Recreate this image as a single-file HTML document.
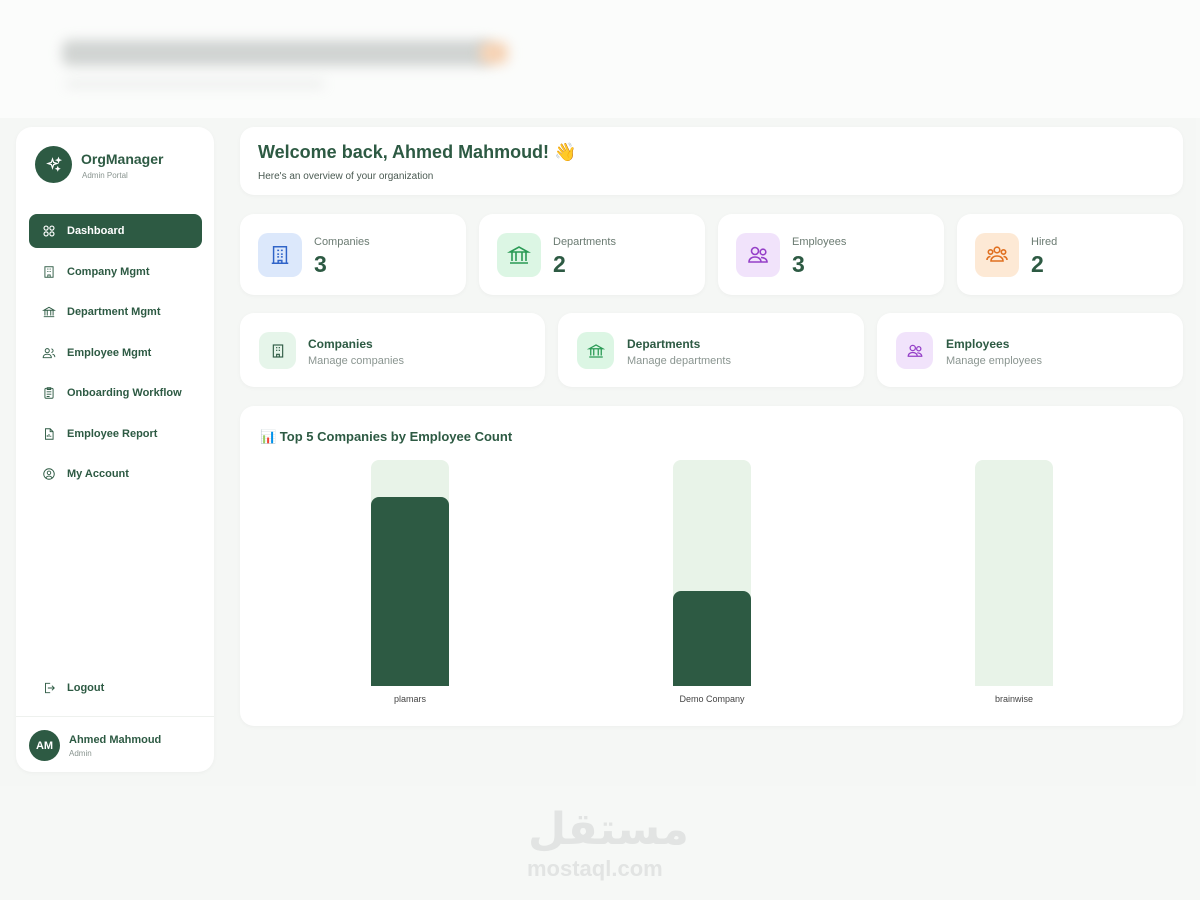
<!DOCTYPE html>
<html><head><meta charset="utf-8"><style>
*{box-sizing:border-box;margin:0;padding:0}
body{width:1200px;height:900px;overflow:hidden;background:#f6f8f6;font-family:"Liberation Sans",sans-serif;color:#2d5a43;position:relative}
.top{position:absolute;left:0;top:0;width:1200px;height:118px;background:#fbfcfb}
.blur{position:absolute;filter:blur(6px);background:#bfc3c1;border-radius:8px}
.main{position:absolute;left:0;top:118px;width:1196px;height:668px;background:#f5f7f5}
.card{position:absolute;background:#fff;border-radius:14px;box-shadow:0 1px 4px rgba(0,0,0,.04)}
.nav{position:absolute;left:29px;width:173px;height:34px;border-radius:8px;display:flex;align-items:center;padding-left:13px;font-size:11px;font-weight:bold;color:#2d5a43}
.nav svg{width:14px;height:14px;margin-right:11px}
.ib{position:absolute;width:44px;height:44px;border-radius:10px;display:flex;align-items:center;justify-content:center}
.lbl{position:absolute;font-size:11px;color:#6b7b72}
.num{position:absolute;font-size:23px;font-weight:bold;color:#2d5a43}
.track{position:absolute;width:78px;top:460px;height:226px;background:#e8f3e8;border-radius:8px 8px 0 0}
.bar{position:absolute;width:78px;background:#2d5a43;border-radius:8px 8px 0 0}
.bl{position:absolute;font-size:9px;color:#444;top:694px;text-align:center;width:120px}
</style></head><body>
<div class="top"></div>
<div class="blur" style="left:62px;top:40px;width:430px;height:26px;opacity:.7"></div>
<div class="blur" style="left:480px;top:42px;width:28px;height:22px;background:#f6d2b3"></div>
<div class="blur" style="left:65px;top:80px;width:260px;height:8px;opacity:.25"></div>
<div class="main"></div>

<div class="card" style="left:16px;top:127px;width:198px;height:645px;border-radius:16px"></div>
<div style="position:absolute;left:35px;top:146px;width:37px;height:37px;border-radius:50%;background:#2d5a43;display:flex;align-items:center;justify-content:center">
<svg width="18" height="18" viewBox="0 0 24 24" fill="none" stroke="#fff" stroke-width="1.6"><path d="M10 4l1.5 4.5L16 10l-4.5 1.5L10 16l-1.5-4.5L4 10l4.5-1.5z"/><path d="M18 3l.7 1.8L20.5 5.5l-1.8.7L18 8l-.7-1.8L15.5 5.5l1.8-.7z"/><path d="M17 15l.6 1.4 1.4.6-1.4.6L17 19l-.6-1.4L15 17l1.4-.6z"/></svg></div>
<div style="position:absolute;left:81px;top:151px;font-size:14px;font-weight:bold">OrgManager</div>
<div style="position:absolute;left:82px;top:171px;font-size:8px;color:#8a9590">Admin Portal</div>

<div class="nav" style="top:214px;background:#2d5a43;color:#fff"><svg viewBox="0 0 24 24" fill="none" stroke="#fff" stroke-width="2"><circle cx="7" cy="7" r="3.5"/><circle cx="17" cy="7" r="3.5"/><circle cx="7" cy="17" r="3.5"/><circle cx="17" cy="17" r="3.5"/></svg>Dashboard</div>
<div class="nav" style="top:255px"><svg viewBox="0 0 24 24" fill="none" stroke="#2d5a43" stroke-width="1.6"><rect x="5" y="3" width="14" height="18"/><path d="M9 7h2M13 7h2M9 11h2M13 11h2M10 21v-4h4v4"/></svg>Company Mgmt</div>
<div class="nav" style="top:295px"><svg viewBox="0 0 24 24" fill="none" stroke="#2d5a43" stroke-width="1.6"><path d="M3 9l9-5 9 5zM5 9v9M9 9v9M15 9v9M19 9v9M3 20h18"/></svg>Department Mgmt</div>
<div class="nav" style="top:336px"><svg viewBox="0 0 24 24" fill="none" stroke="#2d5a43" stroke-width="1.6"><circle cx="9" cy="8" r="3.5"/><path d="M2 20c0-4 3-6 7-6s7 2 7 6zM16 5a3 3 0 010 6M18 14c2 .5 4 2 4 5"/></svg>Employee Mgmt</div>
<div class="nav" style="top:376px"><svg viewBox="0 0 24 24" fill="none" stroke="#2d5a43" stroke-width="1.6"><rect x="5" y="4" width="14" height="17" rx="2"/><path d="M9 3h6v3H9zM8 10h8M8 14h8M8 18h5"/></svg>Onboarding Workflow</div>
<div class="nav" style="top:417px"><svg viewBox="0 0 24 24" fill="none" stroke="#2d5a43" stroke-width="1.6"><path d="M6 3h8l5 5v13H6zM14 3v5h5M9 17v-3M12 17v-5M15 17v-2"/></svg>Employee Report</div>
<div class="nav" style="top:457px"><svg viewBox="0 0 24 24" fill="none" stroke="#2d5a43" stroke-width="1.6"><circle cx="12" cy="12" r="9"/><circle cx="12" cy="10" r="3"/><path d="M6.5 18.5c1.5-2 3.3-3 5.5-3s4 1 5.5 3"/></svg>My Account</div>
<div class="nav" style="top:671px"><svg viewBox="0 0 24 24" fill="none" stroke="#2d5a43" stroke-width="1.6"><path d="M14 4H6v16h8M10 12h11M17 8l4 4-4 4"/></svg>Logout</div>
<div style="position:absolute;left:16px;top:716px;width:198px;border-top:1px solid #eef1ee"></div>
<div style="position:absolute;left:29px;top:730px;width:31px;height:31px;border-radius:50%;background:#2d5a43;color:#fff;font-size:11px;font-weight:bold;display:flex;align-items:center;justify-content:center">AM</div>
<div style="position:absolute;left:69px;top:734px;font-size:11px;font-weight:bold">Ahmed Mahmoud</div>
<div style="position:absolute;left:69px;top:749px;font-size:8px;color:#8a9590">Admin</div>

<div class="card" style="left:240px;top:127px;width:943px;height:68px"></div>
<div style="position:absolute;left:258px;top:142px;font-size:18px;font-weight:bold">Welcome back, Ahmed Mahmoud! 👋</div>
<div style="position:absolute;left:258px;top:171px;font-size:10px;color:#4a5a52">Here's an overview of your organization</div>

<div class="card" style="left:240px;top:214px;width:226px;height:81px"></div>
<div class="card" style="left:479px;top:214px;width:226px;height:81px"></div>
<div class="card" style="left:718px;top:214px;width:226px;height:81px"></div>
<div class="card" style="left:957px;top:214px;width:226px;height:81px"></div>
<div class="ib" style="left:258px;top:233px;background:#dce8fb"><svg width="22" height="22" viewBox="0 0 24 24" fill="none" stroke="#2f63c8" stroke-width="1.6"><rect x="5" y="3" width="14" height="18"/><path d="M9 7h2M13 7h2M9 11h2M13 11h2M9 14h2M13 14h2M10 21v-3h4v3M3 21h18"/></svg></div>
<div class="ib" style="left:497px;top:233px;background:#dcf6e4"><svg width="24" height="24" viewBox="0 0 24 24" fill="none" stroke="#2a9a55" stroke-width="1.6"><path d="M3 9l9-5 9 5zM5 9v9M9 9v9M15 9v9M19 9v9M3 20h18"/></svg></div>
<div class="ib" style="left:736px;top:233px;background:#f1e3fb"><svg width="24" height="24" viewBox="0 0 24 24" fill="none" stroke="#9540c8" stroke-width="1.6"><circle cx="9" cy="8" r="3.5"/><circle cx="17" cy="9" r="2.8"/><path d="M3 19c0-3 2.5-5 6-5s6 2 6 5zM15 14.5c3 0 6 1.5 6 4.5h-6"/></svg></div>
<div class="ib" style="left:975px;top:233px;background:#fde9d5"><svg width="24" height="24" viewBox="0 0 24 24" fill="none" stroke="#e07020" stroke-width="1.6"><circle cx="12" cy="7" r="2.8"/><circle cx="5.5" cy="9" r="2.2"/><circle cx="18.5" cy="9" r="2.2"/><path d="M6 18c0-3 2.5-5 6-5s6 2 6 5zM2 17c0-2 1.5-3.5 3.5-3.5M22 17c0-2-1.5-3.5-3.5-3.5"/></svg></div>
<div class="lbl" style="left:314px;top:236px">Companies</div><div class="num" style="left:314px;top:251px">3</div>
<div class="lbl" style="left:553px;top:236px">Departments</div><div class="num" style="left:553px;top:251px">2</div>
<div class="lbl" style="left:792px;top:236px">Employees</div><div class="num" style="left:792px;top:251px">3</div>
<div class="lbl" style="left:1031px;top:236px">Hired</div><div class="num" style="left:1031px;top:251px">2</div>

<div class="card" style="left:240px;top:313px;width:305px;height:74px"></div>
<div class="card" style="left:558px;top:313px;width:306px;height:74px"></div>
<div class="card" style="left:877px;top:313px;width:306px;height:74px"></div>
<div class="ib" style="left:259px;top:332px;width:37px;height:37px;background:#e6f5ea"><svg width="16" height="16" viewBox="0 0 24 24" fill="none" stroke="#2d5a43" stroke-width="1.7"><rect x="5" y="3" width="14" height="18"/><path d="M9 7h2M13 7h2M9 11h2M13 11h2M10 21v-4h4v4"/></svg></div>
<div class="ib" style="left:577px;top:332px;width:37px;height:37px;background:#dcf6e4"><svg width="18" height="18" viewBox="0 0 24 24" fill="none" stroke="#2a9a55" stroke-width="1.7"><path d="M3 9l9-5 9 5zM5 9v9M9 9v9M15 9v9M19 9v9M3 20h18"/></svg></div>
<div class="ib" style="left:896px;top:332px;width:37px;height:37px;background:#f1e3fb"><svg width="18" height="18" viewBox="0 0 24 24" fill="none" stroke="#9540c8" stroke-width="1.7"><circle cx="9" cy="8" r="3.5"/><circle cx="17" cy="9" r="2.8"/><path d="M3 19c0-3 2.5-5 6-5s6 2 6 5zM15 14.5c3 0 6 1.5 6 4.5h-6"/></svg></div>
<div style="position:absolute;left:308px;top:337px;font-size:12px;font-weight:bold">Companies</div><div class="lbl" style="left:308px;top:355px;color:#8a9590">Manage companies</div>
<div style="position:absolute;left:627px;top:337px;font-size:12px;font-weight:bold">Departments</div><div class="lbl" style="left:627px;top:355px;color:#8a9590">Manage departments</div>
<div style="position:absolute;left:946px;top:337px;font-size:12px;font-weight:bold">Employees</div><div class="lbl" style="left:946px;top:355px;color:#8a9590">Manage employees</div>

<div class="card" style="left:240px;top:406px;width:943px;height:320px"></div>
<div style="position:absolute;left:260px;top:429px;font-size:13px;font-weight:bold">📊 Top 5 Companies by Employee Count</div>
<div class="track" style="left:371px"></div><div class="bar" style="left:371px;top:497px;height:189px"></div>
<div class="track" style="left:673px"></div><div class="bar" style="left:673px;top:591px;height:95px"></div>
<div class="track" style="left:975px"></div>
<div class="bl" style="left:350px">plamars</div>
<div class="bl" style="left:652px">Demo Company</div>
<div class="bl" style="left:954px">brainwise</div>

<div style="position:absolute;left:528px;top:808px;font-size:44px;font-weight:bold;color:#e2e4e3;font-family:'DejaVu Sans',sans-serif;line-height:1">مستقل</div>
<div style="position:absolute;left:527px;top:856px;font-size:22px;font-weight:bold;color:#e2e4e3">mostaql.com</div>
</body></html>
